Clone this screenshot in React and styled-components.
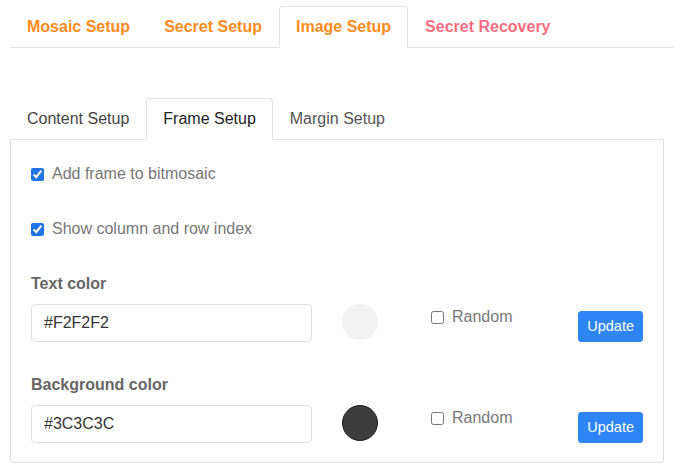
import React from "react";
import styled, { createGlobalStyle } from "styled-components";

const Global = createGlobalStyle`
  body {
    margin: 0;
    background: #fff;
    font-family: "Liberation Sans", Arial, Helvetica, sans-serif;
  }
  * { box-sizing: border-box; }
`;

const Page = styled.div`
  padding: 6px 0 0 10px;
`;

const TabBar = styled.div`
  display: flex;
  border-bottom: 1px solid #e3e3e3;
`;

const Tab = styled.div`
  padding: 8px 16px;
  line-height: 24px;
  font-size: 16px;
  font-weight: ${(p) => (p.$bold ? 700 : 400)};
  color: ${(p) => p.$color};
  border: 1px solid ${(p) => (p.$active ? "#e3e3e3" : "transparent")};
  border-bottom-color: ${(p) => (p.$active ? "#fff" : "transparent")};
  border-radius: 4px 4px 0 0;
  margin-bottom: -1px;
  background: ${(p) => (p.$active ? "#fff" : "transparent")};
  white-space: nowrap;
`;

const Section = styled.div`
  margin: 50px 10px 0 0;
`;

const Panel = styled.div`
  border: 1px solid #dddddd;
  border-top: none;
  border-radius: 0 0 4px 4px;
  padding: 22px 20px 19px;
`;

const CheckRow = styled.label`
  display: flex;
  align-items: center;
  gap: 8px;
  line-height: 24px;
  font-size: 16px;
  color: #777;
  margin-bottom: ${(p) => p.$mb || 0}px;
`;

const Check = styled.input.attrs({ type: "checkbox" })`
  width: 13px;
  height: 13px;
  margin: 0;
  accent-color: #1f74e8;
`;

const FieldLabel = styled.div`
  font-size: 16px;
  font-weight: 700;
  line-height: 24px;
  color: #666;
  margin-top: ${(p) => p.$mt}px;
  margin-bottom: 8px;
`;

const ColorRow = styled.div`
  display: flex;
  align-items: flex-start;
`;

const TextInput = styled.input`
  width: 281px;
  height: 38px;
  padding: 6px 12px;
  font-size: 16px;
  font-family: inherit;
  color: #333;
  border: 1px solid #e0e0e0;
  border-radius: 4px;
  outline: none;
`;

const Swatch = styled.div`
  width: 36px;
  height: 36px;
  margin-left: 30px;
  border-radius: 50%;
  background: ${(p) => p.$color};
  border: ${(p) => (p.$dark ? "1px solid #1e1e1e" : "none")};
`;

const RandomLabel = styled(CheckRow)`
  margin-left: 53px;
  gap: 8px;
  margin-top: 1px;
`;

const Button = styled.button`
  margin-left: auto;
  margin-top: 7px;
  padding: 4px 8px;
  font-family: "Liberation Sans", Arial, sans-serif;
  font-size: 14.5px;
  line-height: 21px;
  color: #fff;
  background: #2e86f6;
  border: 1px solid #2e86f6;
  border-radius: 3px;
`;

const ColorField = ({ label, value, swatch, dark, mt }) => (
  <>
    <FieldLabel $mt={mt}>{label}</FieldLabel>
    <ColorRow>
      <TextInput defaultValue={value} />
      <Swatch $color={swatch} $dark={dark} />
      <RandomLabel>
        <Check />
        Random
      </RandomLabel>
      <Button>Update</Button>
    </ColorRow>
  </>
);

export default function App() {
  return (
    <>
      <Global />
      <Page>
        <TabBar>
          <Tab $bold $color="#ff8c1c">Mosaic Setup</Tab>
          <Tab $bold $color="#ff8c1c">Secret Setup</Tab>
          <Tab $bold $active $color="#ff8c1c">Image Setup</Tab>
          <Tab $bold $color="#ff6e80">Secret Recovery</Tab>
        </TabBar>
        <Section>
          <TabBar>
            <Tab $color="#444">Content Setup</Tab>
            <Tab $active $color="#222">Frame Setup</Tab>
            <Tab $color="#555">Margin Setup</Tab>
          </TabBar>
          <Panel>
            <CheckRow $mb={31}>
              <Check defaultChecked />
              Add frame to bitmosaic
            </CheckRow>
            <CheckRow>
              <Check defaultChecked />
              Show column and row index
            </CheckRow>
            <ColorField label="Text color" value="#F2F2F2" swatch="#f2f2f2" mt={31} />
            <ColorField label="Background color" value="#3C3C3C" swatch="#3c3c3c" dark mt={31} />
          </Panel>
        </Section>
      </Page>
    </>
  );
}
